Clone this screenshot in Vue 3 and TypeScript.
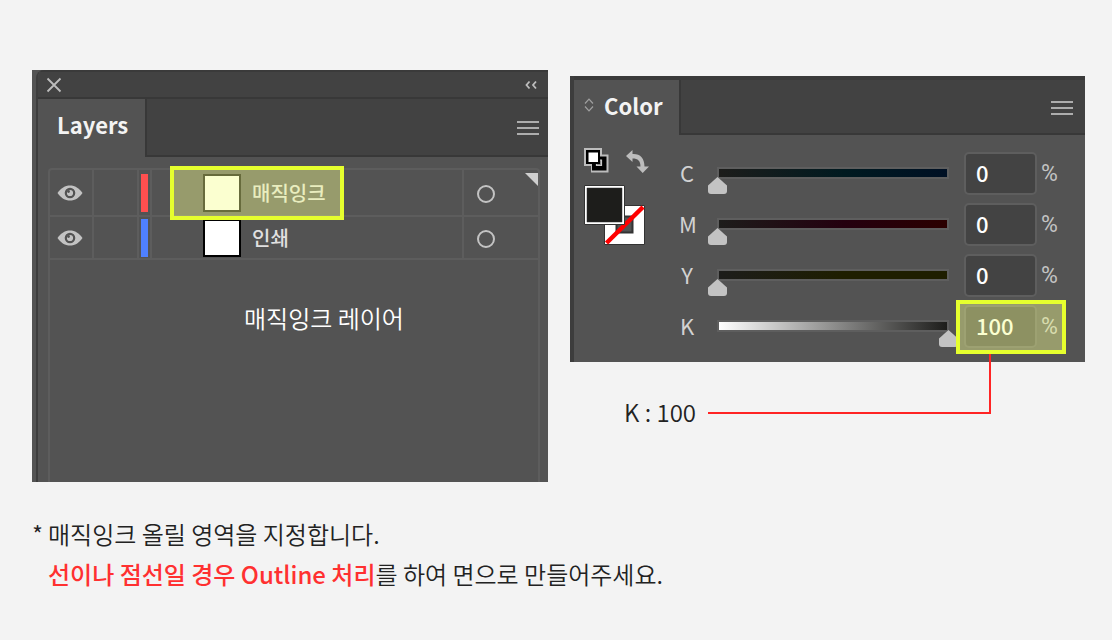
<script setup lang="ts">
import { reactive, ref } from 'vue'

interface Layer {
  name: string
  color: string
  visible: boolean
  marked: boolean
}

interface Channel {
  key: string
  value: number
  ramp: string
  marked: boolean
}

const layers = reactive<Layer[]>([
  { name: '매직잉크', color: 'red', visible: true, marked: true },
  { name: '인쇄', color: 'blue', visible: true, marked: false },
])

const channels = reactive<Channel[]>([
  { key: 'C', value: 0, ramp: 'cyan', marked: false },
  { key: 'M', value: 0, ramp: 'magenta', marked: false },
  { key: 'Y', value: 0, ramp: 'yellow', marked: false },
  { key: 'K', value: 100, ramp: 'black', marked: true },
])

const target = ref('')
</script>

<template>
  <main class="page">
    <div class="figures">
      <section class="layers" aria-label="Layers">
        <div class="window">
          <header class="titlebar">
            <button type="button" class="icon" aria-label="Close">
              <svg width="16" height="16" viewBox="0 0 16 16"><path d="M1.5 1.5 14.5 14.5M14.5 1.5 1.5 14.5" fill="none" stroke="#bdbdbd" stroke-width="1.8" /></svg>
            </button>
            <button type="button" class="icon" aria-label="Collapse">
              <svg width="14" height="10" viewBox="0 0 14 10"><path d="M5.5 1.500 2.500 5l3 3.500M12 1.500 9 5l3 3.500" fill="none" stroke="#bdbdbd" stroke-width="1.800" /></svg>
            </button>
          </header>
          <div class="tabs">
            <button type="button" class="tab">Layers</button>
            <button type="button" class="icon" aria-label="Menu">
              <svg width="22" height="16" viewBox="0 0 22 16"><path d="M0 2h22M0 8h22M0 14h22" stroke="#adadad" stroke-width="2" /></svg>
            </button>
          </div>
          <div class="list">
            <ul>
              <li v-for="layer in layers" :key="layer.name" class="layer">
                <button type="button" class="eye" :aria-label="layer.name" :aria-pressed="layer.visible" @click="layer.visible = !layer.visible">
                  <svg v-if="layer.visible" width="26" height="16" viewBox="0 0 26 16">
                    <path d="M.5 8C4 3 8 .5 13 .5S22 3 25.500 8C22 13 18 15.500 13 15.500S4 13 .500 8Z" fill="#c3c3c3" />
                    <circle cx="13" cy="8" r="4.200" fill="none" stroke="#535353" stroke-width="2.200" />
                    <circle cx="11.500" cy="6.500" r="1.400" fill="#535353" />
                  </svg>
                </button>
                <span class="lock"></span>
                <span class="strip"><i class="bar" :class="layer.color"></i></span>
                <span class="thumb"></span>
                <span class="name">{{ layer.name }}</span>
                <span class="target"><input v-model="target" type="radio" name="target" :value="layer.name" :aria-label="layer.name"></span>
                <span v-if="layer.marked" class="mark layer-mark"></span>
              </li>
            </ul>
            <svg class="corner" width="13" height="13" viewBox="0 0 13 13"><path d="M0 0h13v13Z" fill="#cfcfcf" /></svg>
            <p class="caption">매직잉크 레이어</p>
          </div>
        </div>
      </section>

      <div class="right">
        <section class="color" aria-label="Color">
          <div class="tabs">
            <button type="button" class="tab">
              <svg width="10" height="14" viewBox="0 0 10 14"><path d="M1 5.500 5 1.200 9 5.500M1 8.500l4 4.300 4-4.300" fill="none" stroke="#a0a0a0" stroke-width="1.200" /></svg>
              Color
            </button>
            <button type="button" class="icon" aria-label="Menu">
              <svg width="22" height="16" viewBox="0 0 22 16"><path d="M0 2h22M0 8h22M0 14h22" stroke="#adadad" stroke-width="2" /></svg>
            </button>
          </div>
          <div class="mixer">
            <div class="swatches">
              <div class="swaps">
                <button type="button" class="icon" aria-label="Default fill and stroke">
                  <svg width="25" height="25" viewBox="0 0 25 25">
                    <path d="M0 0h18v6.500h6.500v18H7V18H0Z" fill="#bdbdbd" />
                    <path d="M8 8.500h14.500v14H8Z" fill="#000" />
                    <path d="M12.500 12h5v5.500h-5Z" fill="#8b8b8b" stroke="#c8c8c8" stroke-width="1.200" />
                    <path d="M2 2h14v14H2Z" fill="#000" />
                    <path d="M4.500 4.500h9.500v9.500H4.500Z" fill="#fff" />
                  </svg>
                </button>
                <button type="button" class="icon" aria-label="Swap fill and stroke">
                  <svg width="23" height="23" viewBox="0 0 23 23">
                    <path d="M0 6 6.500 0v4C14 3.500 18.500 8 18.500 16.500H23L16.700 23l-6.200-6.500h4C14.500 11 12 8.500 6.500 8.500V12Z" fill="#bdbdbd" />
                  </svg>
                </button>
              </div>
              <button type="button" class="icon" aria-label="Fill and stroke">
                <svg width="62" height="61" viewBox="0 0 62 61">
                  <path d="M20.500 20.500h40v39h-40Z" fill="#fff" stroke="#333" />
                  <path d="M32.500 31.500h16v16h-16Z" fill="#535353" stroke="#333" stroke-width="2" />
                  <path d="M22.500 58 59 22" stroke="#f00" stroke-width="4.500" />
                  <path d="M.5.5h40v39H.5Z" fill="#fff" stroke="#333" />
                  <path d="M3 3h35v34H3Z" fill="#1d1d1b" stroke="#333" stroke-width=".5" />
                </svg>
              </button>
            </div>
            <div class="channels">
              <div v-for="ch in channels" :key="ch.key" class="channel">
                <label class="key" :for="`value-${ch.key}`">{{ ch.key }}</label>
                <input v-model.number="ch.value" class="slider" :class="ch.ramp" type="range" min="0" max="100" :aria-label="ch.key">
                <input :id="`value-${ch.key}`" v-model.number="ch.value" class="value" type="text">
                <span class="unit">%</span>
                <span v-if="ch.marked" class="mark value-mark"></span>
              </div>
            </div>
          </div>
        </section>
        <div class="callout">
          <p>K : 100</p>
          <span class="connector"></span>
        </div>
      </div>
    </div>

    <div class="notes">
      <span class="star">*</span>
      <p>
        매직잉크 올릴 영역을 지정합니다.<br>
        <strong>선이나 점선일 경우 Outline 처리</strong>를 하여 면으로 만들어주세요.
      </p>
    </div>
  </main>
</template>

<style>
body {
  margin: 0;
  background: #f3f3f3;
}
</style>

<style scoped>
* {
  box-sizing: border-box;
}

.page {
  padding: 70px 27px 24px 32px;
  color: #222;
  font-family: "Noto Sans CJK KR", "Noto Sans", sans-serif;
  font-size: 24px;
  font-weight: 350;
  line-height: 40px;
}

p,
ul {
  margin: 0;
  padding: 0;
}

button {
  margin: 0;
  padding: 0;
  border: 0;
  background: none;
  color: inherit;
  font-family: inherit;
}

.icon {
  display: flex;
}

svg {
  display: block;
}

.figures {
  display: grid;
  grid-template-columns: 516fr 515fr;
  gap: 22px;
  align-items: start;
}

.layers {
  padding-left: 4px;
  background: #535353;
}

.window {
  border-left: 2px solid #3d3d3d;
  border-top-left-radius: 8px;
  background: #535353;
  overflow: hidden;
}

.titlebar {
  display: flex;
  align-items: center;
  justify-content: space-between;
  height: 29px;
  padding: 0 10px 0 8px;
  border-top: 2px solid #3a3a3a;
  border-bottom: 2px solid #383838;
  background: #424242;
}

.tabs {
  display: flex;
  align-items: stretch;
  justify-content: space-between;
  height: 58px;
  background: linear-gradient(#383838, #383838) bottom / 100% 2px no-repeat #424242;
}

.tab {
  display: flex;
  align-items: center;
  gap: 10px;
  padding: 0 17px 8px 19px;
  border-right: 2px solid #383838;
  background: #535353;
  color: #f3f3f3;
  font-size: 22px;
  font-weight: 700;
  line-height: 32px;
}

.tabs > .icon {
  align-items: center;
  padding-right: 9px;
}

.list {
  position: relative;
  min-height: 314px;
  margin: 11px 8px 0 10px;
  border: 2px solid #5d5d5d;
  border-bottom: 0;
  border-radius: 4px 4px 0 0;
}

.layer {
  position: relative;
  display: flex;
  align-items: center;
  height: 43px;
  border-bottom: 2px solid #5d5d5d;
  list-style: none;
}

.layer:first-child {
  z-index: 1;
  height: 47px;
}

.eye,
.lock,
.strip,
.target {
  display: flex;
  align-items: center;
  justify-content: center;
  align-self: stretch;
}

.eye {
  width: 44px;
  padding-right: 2px;
  border-right: 2px solid #5d5d5d;
}

.lock {
  width: 45px;
  border-right: 2px solid #5d5d5d;
}

.strip {
  width: 13px;
  border-right: 2px solid #5d5d5d;
}

.bar {
  width: 7px;
  height: 38px;
}

.red {
  background: #ff4f4f;
}

.blue {
  background: #4f80ff;
}

.thumb {
  width: 38px;
  height: 38px;
  margin-left: 51px;
  border: 2px solid #000;
  background: #fff;
}

.name {
  flex: 1;
  padding-left: 11px;
  color: #e0e0e0;
  font-size: 20px;
  font-weight: 500;
  line-height: 30px;
}

.target {
  width: 76px;
  justify-content: flex-start;
  padding-left: 13px;
  border-left: 2px solid #5d5d5d;
}

.target input {
  width: 18px;
  height: 18px;
  margin: 2px 0 0;
  border: 2px solid #c3c3c3;
  border-radius: 50%;
  appearance: none;
}

.target input:checked {
  background: #c3c3c3;
}

.mark {
  position: absolute;
  border: 4px solid #e6ff2e;
  background: rgba(245, 255, 144, 0.42);
  background-clip: padding-box;
  pointer-events: none;
}

.layer-mark {
  top: -4px;
  left: 120px;
  width: 174px;
  height: 54px;
}

.corner {
  position: absolute;
  top: 3px;
  right: 0;
}

.caption {
  padding: 38px 0 0 194px;
  color: #fff;
}

.right {
  padding-top: 6px;
}

.color {
  padding-top: 4px;
  border-left: 4px solid #3d3d3d;
  background: linear-gradient(#3a3a3a, #3a3a3a) top / 100% 4px no-repeat #535353;
}

.color .tabs {
  height: 55px;
}

.color .tab {
  padding: 0 16px 6px 10px;
}

.color .tabs > .icon {
  padding-right: 12px;
}

.mixer {
  display: flex;
  gap: 30px;
  padding: 13px 28px 14px 10px;
}

.swatches {
  display: flex;
  flex-direction: column;
  gap: 12px;
}

.swaps {
  display: flex;
  gap: 17px;
  align-items: flex-end;
}

.channels {
  display: flex;
  flex: 1;
  flex-direction: column;
  gap: 8px;
  padding-top: 4px;
}

.channel {
  position: relative;
  display: flex;
  align-items: center;
  height: 43px;
}

.key {
  width: 16px;
  padding-bottom: 4px;
  color: #d2d2d2;
  font-size: 22px;
  font-weight: 400;
  line-height: 32px;
  text-align: center;
}

.slider {
  --ramp: linear-gradient(90deg, #1d1d1b, #001a20 55%, #001024);
  align-self: flex-end;
  flex: 1;
  min-width: 0;
  height: 29px;
  margin: 0 6px 0 13px;
  background:
    var(--ramp) center 3px / calc(100% - 22px) 8px no-repeat,
    linear-gradient(#5e5e5e, #5e5e5e) center 1px / calc(100% - 18px) 12px no-repeat;
  appearance: none;
}

.slider.magenta {
  --ramp: linear-gradient(90deg, #1d1d1b, #24000f 55%, #2b0000);
}

.slider.yellow {
  --ramp: linear-gradient(90deg, #1d1d1b, #1e1e00 55%, #1e1e00);
}

.slider.black {
  --ramp: linear-gradient(90deg, #fff, #1d1d1b);
}

.slider::-webkit-slider-runnable-track {
  height: 29px;
}

.slider::-webkit-slider-thumb {
  width: 19px;
  height: 17px;
  margin-top: 11px;
  border-radius: 0 0 3px 3px;
  background: #c3c3c3;
  clip-path: polygon(50% 0, 100% 50%, 100% 100%, 0 100%, 0 50%);
  appearance: none;
}

.value {
  width: 73px;
  height: 43px;
  padding: 0 0 4px 10px;
  border: 2px solid #5e5e5e;
  border-radius: 5px;
  background: #434343;
  color: #fff;
  font-family: inherit;
  font-size: 22px;
  font-weight: 500;
}

.unit {
  width: 20px;
  padding-left: 4px;
  color: #c3c3c3;
  font-family: Roboto, sans-serif;
  font-size: 23px;
  font-weight: 400;
  line-height: 32px;
}

.value-mark {
  top: -5px;
  right: -9px;
  width: 110px;
  height: 54px;
}

.callout {
  position: relative;
  display: flex;
  gap: 12px;
  margin-top: -8px;
  padding: 0 94px 0 54px;
}

.callout p {
  padding-top: 38px;
}

.connector {
  flex: 1;
  height: 60px;
  border-right: 2px solid #ff2424;
  border-bottom: 2px solid #ff2424;
}

.notes {
  display: flex;
  margin-top: 32px;
}

.star {
  width: 16px;
}

strong {
  color: #ff3030;
  font-weight: 500;
}
</style>
